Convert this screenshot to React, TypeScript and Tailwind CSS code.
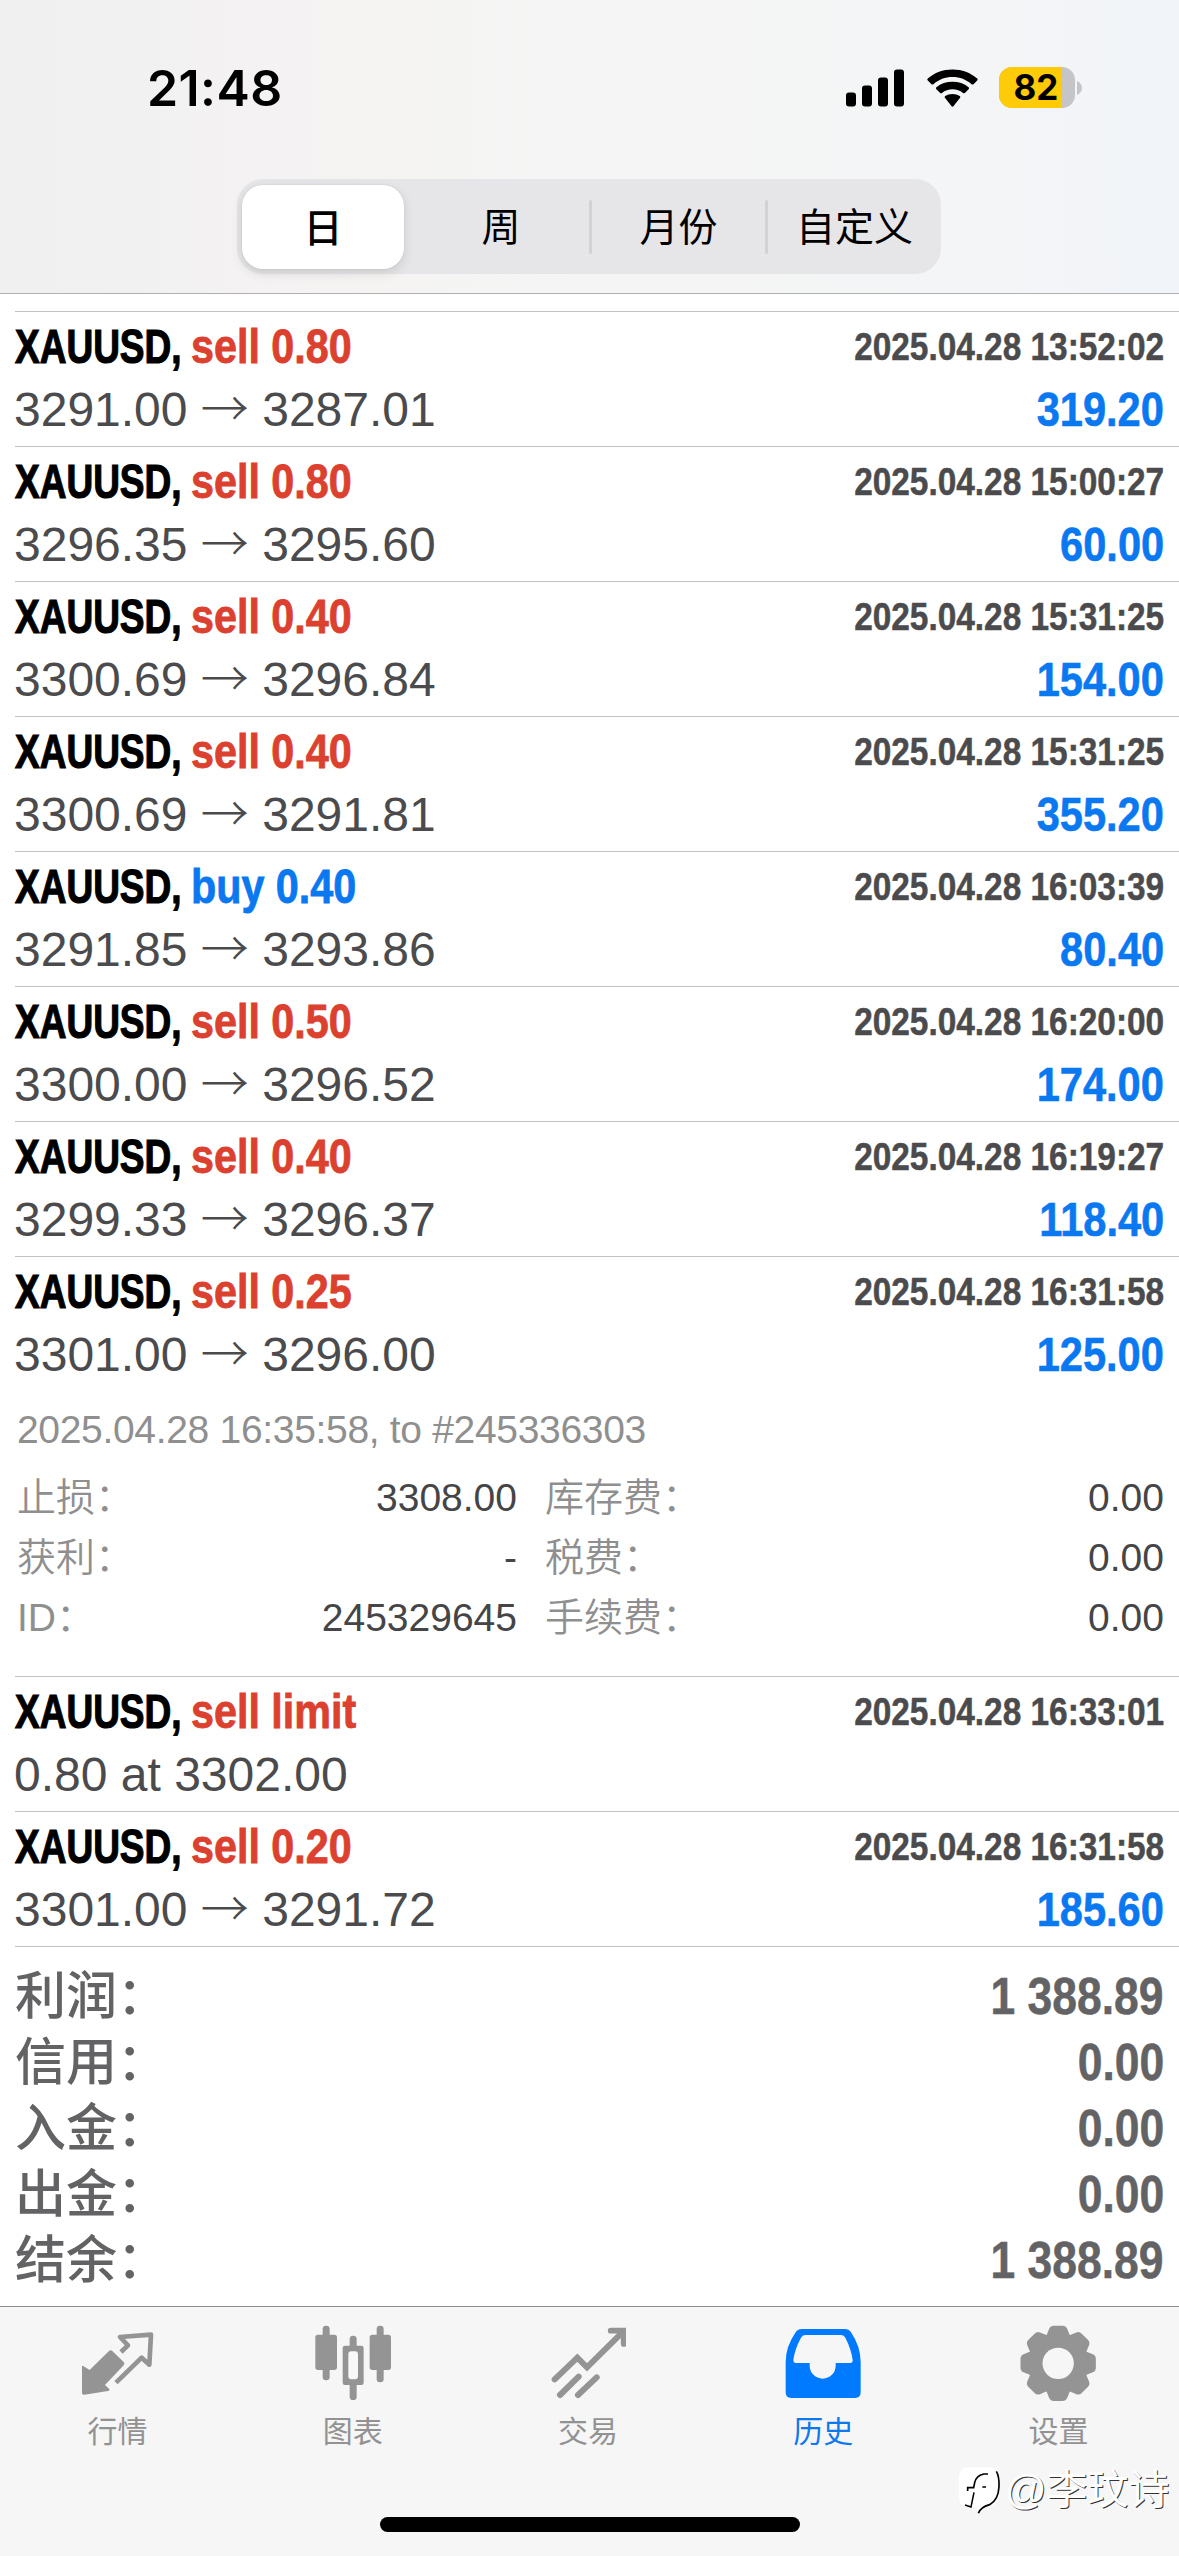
import React from "react";

type Deal = {
  side: "sell" | "buy";
  label: string;
  time: string;
  from?: string;
  to?: string;
  note?: string;
  profit?: string;
  detailed?: boolean;
};

const deals: Deal[] = [
  { side: "sell", label: "sell 0.80", time: "2025.04.28 13:52:02", from: "3291.00", to: "3287.01", profit: "319.20" },
  { side: "sell", label: "sell 0.80", time: "2025.04.28 15:00:27", from: "3296.35", to: "3295.60", profit: "60.00" },
  { side: "sell", label: "sell 0.40", time: "2025.04.28 15:31:25", from: "3300.69", to: "3296.84", profit: "154.00" },
  { side: "sell", label: "sell 0.40", time: "2025.04.28 15:31:25", from: "3300.69", to: "3291.81", profit: "355.20" },
  { side: "buy", label: "buy 0.40", time: "2025.04.28 16:03:39", from: "3291.85", to: "3293.86", profit: "80.40" },
  { side: "sell", label: "sell 0.50", time: "2025.04.28 16:20:00", from: "3300.00", to: "3296.52", profit: "174.00" },
  { side: "sell", label: "sell 0.40", time: "2025.04.28 16:19:27", from: "3299.33", to: "3296.37", profit: "118.40" },
  { side: "sell", label: "sell 0.25", time: "2025.04.28 16:31:58", from: "3301.00", to: "3296.00", profit: "125.00", detailed: true },
  { side: "sell", label: "sell limit", time: "2025.04.28 16:33:01", note: "0.80 at 3302.00" },
  { side: "sell", label: "sell 0.20", time: "2025.04.28 16:31:58", from: "3301.00", to: "3291.72", profit: "185.60" },
];

const details = [
  { a: "止损：", av: "3308.00", b: "库存费：", bv: "0.00" },
  { a: "获利：", av: "-", b: "税费：", bv: "0.00" },
  { a: "ID：", av: "245329645", b: "手续费：", bv: "0.00" },
];

const totals = [
  { name: "利润：", value: "1 388.89" },
  { name: "信用：", value: "0.00" },
  { name: "入金：", value: "0.00" },
  { name: "出金：", value: "0.00" },
  { name: "结余：", value: "1 388.89" },
];

function StatusBar() {
  return (
    <div className="flex h-[179px] items-start justify-between pl-[147px] pr-[97px] pt-[57px]">
      <span className="font-['Inter'] text-[50px] leading-[62px] font-semibold tracking-[0.4px] text-black">21:48</span>
      <div className="flex h-[61px] items-center">
        <svg className="mr-[22px] h-[38px] w-[59px]" viewBox="0 0 59 38" fill="#000">
          <rect x="0" y="23.5" width="10" height="14" rx="3" />
          <rect x="16" y="16.5" width="10" height="21" rx="3" />
          <rect x="32" y="8.5" width="10" height="29" rx="3" />
          <rect x="48" y="0.5" width="10" height="37" rx="3" />
        </svg>
        <svg className="mr-[21px] h-[38px] w-[51px]" viewBox="0 0 51 38" fill="#000">
          <path d="M0.8 11.6C0.2 11 0.2 10.2 0.8 9.6C7.5 3.600 16 0.500 25.500 0.500C35 0.500 43.500 3.600 50.200 9.600C50.800 10.200 50.800 11 50.200 11.600L46.500 15.200C46 15.700 45.200 15.700 44.600 15.200C39.500 10.600 32.800 8 25.500 8C18.200 8 11.500 10.600 6.400 15.200C5.800 15.700 5 15.700 4.500 15.200Z" />
          <path d="M9.400 20.200C8.800 19.600 8.800 18.800 9.400 18.300C13.800 14.500 19.400 12.800 25.500 12.800C31.600 12.800 37.200 14.500 41.600 18.300C42.200 18.800 42.200 19.600 41.600 20.200L37.900 23.900C37.300 24.400 36.600 24.400 36 24C33 21.600 29.500 20.300 25.500 20.300C21.500 20.300 18 21.600 15 24C14.400 24.400 13.700 24.400 13.100 23.900Z" />
          <path d="M18.100 28.900C17.500 28.300 17.500 27.500 18.200 27C20.300 25.600 22.800 24.900 25.500 24.900C28.200 24.900 30.700 25.600 32.800 27C33.500 27.500 33.500 28.300 32.900 28.900L26.600 37.100C26 37.800 25 37.800 24.400 37.100Z" />
        </svg>
        <div className="relative flex h-[41px] w-[76px] items-center justify-center overflow-hidden rounded-[13px] bg-[#c5c5c7] pr-[2px]">
          <div className="absolute inset-y-0 left-0 w-[63px] bg-[#fecb08]" />
          <span className="relative font-['Inter'] text-[35px] leading-[41px] font-bold text-black">82</span>
        </div>
        <svg className="ml-[2px] h-[14px] w-[5px]" viewBox="0 0 5 14" fill="#c5c5c7">
          <path d="M0 0C3 1.500 5 4 5 7S3 12.500 0 14Z" />
        </svg>
      </div>
    </div>
  );
}

function Segments() {
  const cell = "flex h-full items-center justify-center pt-[2px] text-[39px] leading-[48px] text-black";
  return (
    <div className="ml-[237px] grid h-[95px] w-[704px] grid-cols-4 rounded-[26px] bg-[#e6e6e8] font-['Liberation_Sans','Noto_Sans_CJK_SC',sans-serif]">
      <div className="py-[6px] pl-[5px] pr-[9px]">
        <div className="flex h-[84px] items-center justify-center rounded-[21px] bg-white pt-[3px] text-[39px] leading-[48px] font-medium text-black shadow-[0_4px_12px_rgba(0,0,0,0.12),0_0_2px_rgba(0,0,0,0.1)]">
          日
        </div>
      </div>
      <div className={cell}>周</div>
      <div className="flex items-center">
        <div className="h-[54px] w-[3px] rounded bg-[#d2d2d4]" />
        <div className={cell + " flex-1"}>月份</div>
      </div>
      <div className="flex items-center">
        <div className="h-[54px] w-[3px] rounded bg-[#d2d2d4]" />
        <div className={cell + " flex-1"}>自定义</div>
      </div>
    </div>
  );
}

function Details() {
  return (
    <div className="h-[285px] pt-[9px] pr-[15px] pl-px text-[39px] leading-[60px] text-[#8f8f8f]">
      <div className="pl-px tracking-[-0.32px]">2025.04.28 16:35:58, to #245336303</div>
      <div className="mt-2">
        {details.map((d) => (
          <div key={d.a} className="flex h-[60px]">
            <div className="flex w-[501px] justify-between pl-px">
              <span className="font-[350]">{d.a}</span>
              <span className="text-[#454547]">{d.av}</span>
            </div>
            <div className="flex flex-1 justify-between pl-[28px]">
              <span className="font-[350]">{d.b}</span>
              <span className="text-[#454547]">{d.bv}</span>
            </div>
          </div>
        ))}
      </div>
    </div>
  );
}

function DealRow({ deal }: { deal: Deal }) {
  return (
    <div className="ml-[15px] border-t border-[#c2c2c4]">
      <div className="h-[134px] pt-[5px] pr-[15px]">
        <div className="flex h-[60px] justify-between text-[48px] leading-[60px] font-bold whitespace-nowrap">
          <div className="flex">
            <span className="w-[176px] origin-left scale-x-[0.771] text-black [-webkit-text-stroke:1.2px_currentColor]">XAUUSD,</span>
            <span
              className={
                deal.side === "sell"
                  ? "origin-left scale-x-[0.86] text-[#dc402f] [-webkit-text-stroke:0.8px_currentColor]"
                  : "origin-left scale-x-[0.86] text-[#0a78f0] [-webkit-text-stroke:0.8px_currentColor]"
              }
            >
              {deal.label}
            </span>
          </div>
          <span className="origin-right scale-x-[0.856] text-[39px] text-[#4b4b4d] [-webkit-text-stroke:0.5px_currentColor]">{deal.time}</span>
        </div>
        <div className="flex h-[66px] justify-between text-[48px] leading-[66px] whitespace-nowrap">
          <span className="-ml-px text-[#4b4b4d]">
            {deal.note ?? (
              <>
                {deal.from} <span className="font-['Noto_Sans_CJK_SC'] leading-[0px] font-light">→</span> {deal.to}
              </>
            )}
          </span>
          {deal.profit && (
            <span className="origin-right scale-x-[0.866] font-bold text-[#0a78f0] [-webkit-text-stroke:0.6px_currentColor]">{deal.profit}</span>
          )}
        </div>
      </div>
      {deal.detailed && <Details />}
    </div>
  );
}

function Totals() {
  return (
    <div className="ml-[15px] h-[360px] border-t border-[#c2c2c4] pt-[17px] pr-[15px] text-[51px] leading-[66px] text-[#636365]">
      {totals.map((t) => (
        <div key={t.name} className="flex h-[66px] justify-between">
          <span className="font-medium">{t.name}</span>
          <span className="origin-right scale-x-[0.872] font-bold [-webkit-text-stroke:0.5px_currentColor]">{t.value}</span>
        </div>
      ))}
    </div>
  );
}

const iconClass = "h-[78px] w-[76px]";

function QuotesIcon() {
  return (
    <svg className={iconClass} viewBox="238 102 228 234" fill="#949494">
      <path d="M244 230Q244 225 249 229L267 240L325 183Q330 178 335 183L369 216Q374 221 369 226L313 285L325 296Q329 301 322 303L251 314Q244 315 244 309Z" />
      <path d="M361 186L382 166L358 141L451 134L446 224L423 203L346 278" fill="none" stroke="#949494" strokeWidth="14" strokeLinejoin="round" />
    </svg>
  );
}

function ChartIcon() {
  return (
    <svg className={iconClass} viewBox="943 102 228 234" fill="#949494">
      <rect x="966" y="107" width="21" height="164" rx="10" />
      <rect x="944" y="134" width="65" height="106" rx="8" />
      <rect x="1128" y="107" width="21" height="170" rx="10" />
      <rect x="1107" y="134" width="64" height="106" rx="8" />
      <rect x="1047" y="137" width="21" height="193" rx="10" />
      <rect x="1026" y="167" width="63" height="118" rx="7" />
      <rect x="1043" y="184" width="29" height="84" rx="9" fill="#f8f8f8" />
    </svg>
  );
}

function TradeIcon() {
  return (
    <svg className={iconClass} viewBox="298 102 228 234" fill="none" stroke="#949494" strokeWidth="18" strokeLinecap="round">
      <path d="M312 268L380 203L409 232L512 130" strokeLinejoin="miter" />
      <path d="M480 122H519V162" strokeWidth="17" />
      <path d="M328 315L384 260" strokeWidth="18" />
      <path d="M382 315L438 262" />
    </svg>
  );
}

function HistoryIcon() {
  return (
    <svg className={iconClass} viewBox="1006 102 228 234">
      <path
        fill="#007aff"
        fillRule="evenodd"
        d="M1056 117H1186Q1197 117 1204 127Q1233 170 1233 216V307Q1233 324 1216 324H1025Q1008 324 1008 307V216Q1008 170 1038 127Q1045 117 1056 117ZM1066 135Q1058 135 1054 143Q1035 178 1031 210Q1031 219 1039 219H1080V227A39 39 0 0 0 1158 227V219H1201Q1210 219 1209 210Q1205 178 1187 143Q1183 135 1175 135Z"
      />
    </svg>
  );
}

function SettingsIcon() {
  return (
    <svg className={iconClass} viewBox="427 102 228 234" fill="#949494">
      <g transform="translate(541.500 220)">
        {[0, 45, 90, 135, 180, 225, 270, 315].map((angle) => (
          <path key={angle} transform={`rotate(${angle})`} d="M-38 -78L-33 -89L-27 -104Q-23 -113 -13 -113H13Q23 -113 27 -104L33 -89L38 -78Z" />
        ))}
        <circle r="91" />
        <circle r="47" fill="#f6f6f6" />
      </g>
    </svg>
  );
}

const tabs = [
  { name: "行情", Icon: QuotesIcon },
  { name: "图表", Icon: ChartIcon },
  { name: "交易", Icon: TradeIcon },
  { name: "历史", Icon: HistoryIcon, active: true },
  { name: "设置", Icon: SettingsIcon },
];

function TabBar() {
  return (
    <div className="relative h-[250px] border-t border-[#8e8e90] bg-[#f6f6f6]">
      <div className="grid grid-cols-5 pt-[17px] pr-[3px]">
        {tabs.map(({ name, Icon, active }) => (
          <div key={name} className="flex flex-col items-center">
            <Icon />
            <span className={active ? "mt-3 text-[30px] leading-9 text-[#0f78ec]" : "mt-3 text-[30px] leading-9 text-[#929292]"}>{name}</span>
          </div>
        ))}
      </div>
      <div className="absolute top-[210px] left-[380px] h-[15px] w-[420px] rounded-full bg-black" />
      <div className="absolute top-[157px] left-[957px] flex items-center">
        <svg className="h-[52px] w-[48px]" viewBox="54 82 144 156">
          <path d="M88 92H146Q180 92 181 130V165Q181 200 148 212Q128 216 118 230L112 212H98Q60 214 60 178V125Q60 92 88 92Z" fill="#fff" />
          <path d="M172 104Q181 118 180 150Q178 190 152 204Q124 212 118 230" fill="none" stroke="#000" strokeWidth="5" />
          <path d="M147 112H135Q112 116 107 138L104 153H86V163" fill="none" stroke="#000" strokeWidth="5" />
          <path d="M105 167L96 211L78 205M130 151H141" fill="none" stroke="#000" strokeWidth="4.500" />
        </svg>
        <span className="text-[41px] leading-[52px] whitespace-nowrap text-white [text-shadow:1px_1px_0_#333]">@李玟诗</span>
      </div>
    </div>
  );
}

export default function App() {
  return (
    <div className="flex h-[2556px] w-[1179px] flex-col overflow-hidden bg-white font-['Liberation_Sans','Noto_Sans_CJK_SC',sans-serif]">
      <header className="h-[294px] border-b border-[#b0b0b3] bg-[linear-gradient(90deg,#f0f0f0_0%,#f4f2f2_22%,#f5f4f3_32%,#f5f5f5_50%,#f4f5f6_80%,#f1f4f9_100%)]">
        <StatusBar />
        <Segments />
      </header>
      <main className="h-[2012px] pt-[17px]">
        {deals.map((deal, i) => (
          <DealRow key={i} deal={deal} />
        ))}
        <Totals />
      </main>
      <TabBar />
    </div>
  );
}
